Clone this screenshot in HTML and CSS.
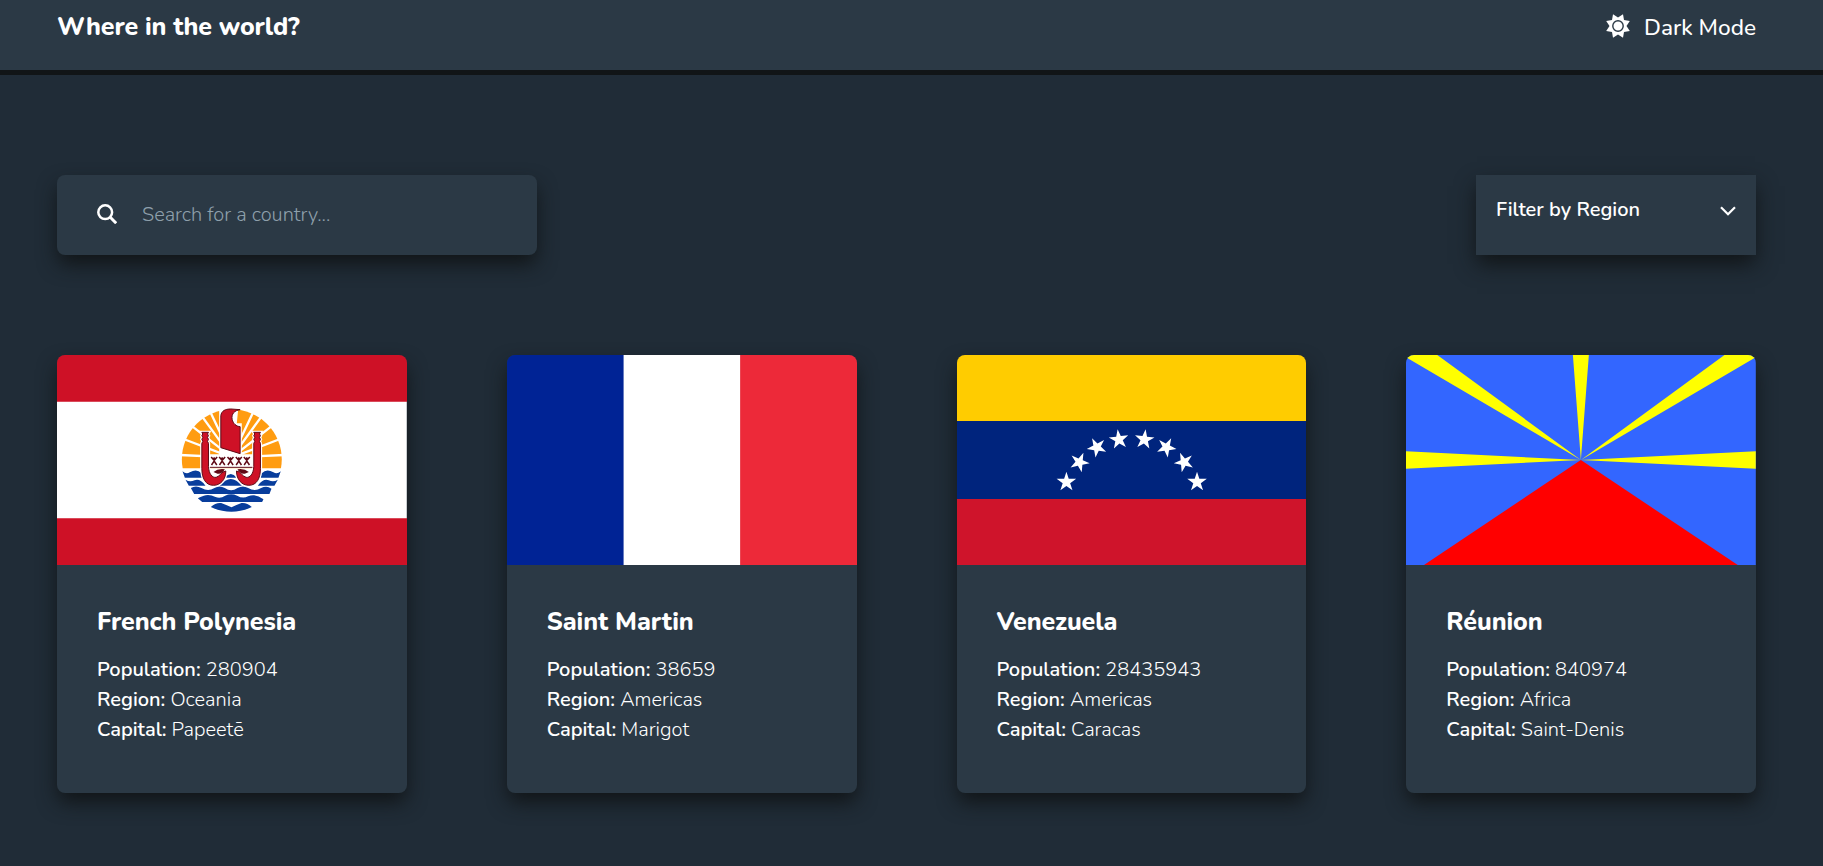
FILE: index.html
```html
<!DOCTYPE html>
<html lang="en">
<head>
<meta charset="utf-8">
<title>Where in the world?</title>
<link rel="stylesheet" href="styles.css">
</head>
<body>
<header class="header">
  <h1 class="brand">Where in the world?</h1>
  <button class="mode">
    <svg class="mode-icon" viewBox="-12 -12 24 24"><path fill="#fff" d="M5-11.8 6-6 11.8-5 8.5 0 11.8 5 6 6 5 11.8 0 8.5-5 11.8-6 6-11.8 5-8.5 0-11.8-5-6-6-5-11.8 0-8.5Z"/><circle r="5.2" fill="#fff" stroke="#2b3945" stroke-width="1.4"/></svg>
    <span class="mode-text">Dark Mode</span>
  </button>
</header>
<main class="main">
  <div class="controls">
    <label class="search">
      <svg class="search-icon" viewBox="0 0 20 20" fill="none" stroke="#fff" stroke-width="2.5"><circle cx="8.2" cy="8.2" r="6.9"/><path d="M13 13l6.2 6.2" stroke-width="3"/></svg>
      <input class="search-input" type="text" placeholder="Search for a country...">
    </label>
    <div class="filter">
      <span class="filter-text">Filter by Region</span>
      <svg class="chevron" viewBox="0 0 16 10" fill="none" stroke="#fff" stroke-width="2.2"><path d="M1 1.2 8 8.3 15 1.2"/></svg>
    </div>
  </div>
  <section class="grid">
    <article class="card">
      <svg class="flag" viewBox="0 0 350 210" preserveAspectRatio="none">
        <defs>
          <clipPath id="sun"><path d="M0 0H370V205H0Z"/></clipPath>
          <g id="hook">
            <path d="M97 97H117L114 102 117 107 114 112 117 118 114 124 117 130V200C118 221 128 234 140 232 152 229 156 214 169 213 169 240 152 256 132 256 108 256 97 235 97 205V130L100 124 97 118 100 112 97 107 100 102Z" fill="#fff" stroke="#fff" stroke-width="10"/>
            <path d="M97 97H117L114 102 117 107 114 112 117 118 114 124 117 130V200C118 221 128 234 140 232 152 229 156 214 169 213 169 240 152 256 132 256 108 256 97 235 97 205V130L100 124 97 118 100 112 97 107 100 102Z" fill="#ce1126" stroke="#5f0a16" stroke-width="3"/>
            <path d="M132 216Q145 205 166 208 158 223 144 221Z" fill="#5f0a16"/>
          </g>
          <path id="person" d="M-9-12 0-2 9-12M-8 12 0 0 8 12M0-11V4" fill="none" stroke="#5f0a16" stroke-width="4.5"/>
        </defs>
        <path fill="#fff" d="M0 46H350V164H0Z"/>
        <path fill="#ce1126" d="M-1 0H351V46.67H-1ZM-1 163.33H351V210H-1Z"/>
        <g transform="translate(112.6 45) scale(.33333)">
          <g clip-path="url(#sun)">
            <circle cx="187" cy="178" r="150" fill="#ff9c11"/>
            <path stroke="#fff" stroke-width="7" d="M187 172 30 165M187 172 34 114M187 172 54 68M187 172 85 32M187 172 114 18M187 172 344 165M187 172 340 114M187 172 320 68M187 172 289 32M187 172 260 18"/>
            <path fill="#fff" d="M121 163H250V210H121ZM149 10H208L202 70H217V168H149Z"/>
          </g>
          <g fill="#083d9c">
            <path d="M39 214Q50 224 61 217 82 204 96 220L99 233H46ZM334 214Q323 224 312 217 291 204 277 220L274 233H327ZM166 233Q184 211 202 233Z"/>
            <path d="M48 239Q61 248 75 241 91 234 108 257H58ZM325 239Q312 248 298 241 282 234 265 257H315ZM151 257Q184 217 217 257Z"/>
            <path d="M64 264Q79 255 96 264 116 276 135 264 150 255 166 264 185 277 204 264 220 255 236 264 256 276 275 264 292 255 306 266L300 282H74Z"/>
            <path d="M85 295Q92 291 103 287 119 281 138 291 153 297 167 287 185 279 203 287 220 297 236 289 258 279 282 298L278 306H98Z"/>
            <path d="M124 321Q139 307 155 309 170 314 186 322 201 314 216 309 232 307 247 321 186 350 124 321Z"/>
          </g>
          <path d="M154 47C156 33 166 27 184 27L212 29C195 31 185 42 188 58 191 71 200 79 212 80V161L154 143Z" fill="#ce1126" stroke="#5f0a16" stroke-width="3"/>
          <use href="#hook"/><use href="#hook" transform="translate(370) scale(-1 1)"/>
          <path d="M121 202H249" stroke="#5f0a16" stroke-width="3"/>
          <use href="#person" x="134" y="183"/><use href="#person" x="158" y="183"/><use href="#person" x="183" y="183"/><use href="#person" x="208" y="183"/><use href="#person" x="232" y="183"/>
        </g>
      </svg>
      <div class="info">
        <h2 class="name">French Polynesia</h2>
        <p class="row"><b class="key">Population:</b> <span>280904</span></p>
        <p class="row"><b class="key">Region:</b> <span>Oceania</span></p>
        <p class="row"><b class="key">Capital:</b> <span>Papeetē</span></p>
      </div>
    </article>
    <article class="card">
      <svg class="flag" viewBox="0 0 350 210" preserveAspectRatio="none">
        <path fill="#fff" d="M116 0H234V210H116Z"/><path fill="#002395" d="M-1 0H116.67V210H-1Z"/><path fill="#ed2939" d="M233.33 0H351V210H233.33Z"/>
      </svg>
      <div class="info">
        <h2 class="name">Saint Martin</h2>
        <p class="row"><b class="key">Population:</b> <span>38659</span></p>
        <p class="row"><b class="key">Region:</b> <span>Americas</span></p>
        <p class="row"><b class="key">Capital:</b> <span>Marigot</span></p>
      </div>
    </article>
    <article class="card">
      <svg class="flag" viewBox="0 0 350 210" preserveAspectRatio="none">
        <defs><path id="star" fill="#fff" d="M0-10.3 2.3-3.15 9.8-3.15 3.74 1.22 6.05 8.33 0 3.93-6.05 8.33-3.74 1.22-9.8-3.15-2.3-3.15Z"/></defs>
        <path fill="#fc0" d="M0 0H350V66H0Z"/><path fill="#00247d" d="M0 66H350V144H0Z"/><path fill="#cf142b" d="M0 144H350V210H0Z"/>
        <use href="#star" transform="translate(109.5 127)"/><use href="#star" transform="translate(122.5 107.2) rotate(23)"/><use href="#star" transform="translate(140 92.3) rotate(-28)"/><use href="#star" transform="translate(162 84.5) rotate(-7)"/>
        <use href="#star" transform="translate(187.5 84.5) rotate(7)"/><use href="#star" transform="translate(209.5 92.3) rotate(28)"/><use href="#star" transform="translate(227.2 107.2) rotate(-23)"/><use href="#star" transform="translate(240.2 127)"/>
      </svg>
      <div class="info">
        <h2 class="name">Venezuela</h2>
        <p class="row"><b class="key">Population:</b> <span>28435943</span></p>
        <p class="row"><b class="key">Region:</b> <span>Americas</span></p>
        <p class="row"><b class="key">Capital:</b> <span>Caracas</span></p>
      </div>
    </article>
    <article class="card">
      <svg class="flag" viewBox="0 0 350 210" preserveAspectRatio="none">
        <path fill="#36f" d="M0 0H350V210H0Z"/>
        <path fill="#ff0" d="M175 105 0 96.3V113.8ZM175 105 350 96.3V113.8ZM175 105 167 0H183ZM175 105 0 2.3V0H31.3ZM175 105 350 2.3V0H318.7Z"/>
        <path fill="red" d="M175 105 332 210H18Z"/>
      </svg>
      <div class="info">
        <h2 class="name">Réunion</h2>
        <p class="row"><b class="key">Population:</b> <span>840974</span></p>
        <p class="row"><b class="key">Region:</b> <span>Africa</span></p>
        <p class="row"><b class="key">Capital:</b> <span>Saint-Denis</span></p>
      </div>
    </article>
  </section>
</main>
</body>
</html>
```
FILE: styles.css
```css
* { box-sizing: border-box; margin: 0; padding: 0; }
body {
  background: #202c37;
  color: #fff;
  font-family: Nunito, Lato, sans-serif;
  font-size: 20px;
  height: 866px;
  overflow: hidden;
}
.header {
  display: flex;
  justify-content: space-between;
  align-items: flex-start;
  height: 75px;
  padding: 10px 67px 0 57px;
  background: #2b3945;
  border-bottom: 5px solid #111517;
}
.brand { font-size: 25px; line-height: 34px; font-weight: 800; letter-spacing: -0.1px; }
.mode {
  display: flex;
  align-items: flex-start;
  gap: 14px;
  background: none;
  border: 0;
  color: #fff;
  font: 500 22.6px/34px Nunito, Lato, sans-serif;
}
.mode-icon { width: 24px; height: 24px; margin-top: 4px; }
.mode-text { padding-top: 1px; }
.main { padding: 100px 67px 0 57px; }
.controls { display: flex; justify-content: space-between; }
.search, .filter { height: 80px; background: #2b3945; box-shadow: 0 10px 20px -1px #111517; }
.search { display: flex; align-items: center; width: 480px; padding: 0 40px 2px; gap: 25px; border-radius: 8px; }
.search-icon { width: 20px; height: 20px; flex: none; }
.search-input { flex: 1; background: none; border: 0; outline: 0; color: #fff; font: 300 20px Nunito, Lato, sans-serif; }
.search-input::placeholder { color: #8fa0ac; }
.filter { display: flex; justify-content: space-between; align-items: flex-start; width: 280px; padding: 20px 20px 0; font-weight: 600; line-height: 30px; }
.chevron { width: 16px; height: 10px; margin-top: 11px; }
.grid { display: grid; grid-template-columns: repeat(4, 1fr); gap: 100px; margin-top: 100px; }
.card { height: 438px; border-radius: 8px; overflow: hidden; background: #2b3945; box-shadow: 0 10px 20px -1px #111517; }
.flag { display: block; width: 100%; height: 210px; }
.info { padding: 40px 40px 0; }
.name { font-size: 25px; line-height: 34px; font-weight: 800; letter-spacing: -0.05px; margin-bottom: 16px; }
.row { line-height: 30px; font-weight: 300; }
.key { font-weight: 600; }
```
